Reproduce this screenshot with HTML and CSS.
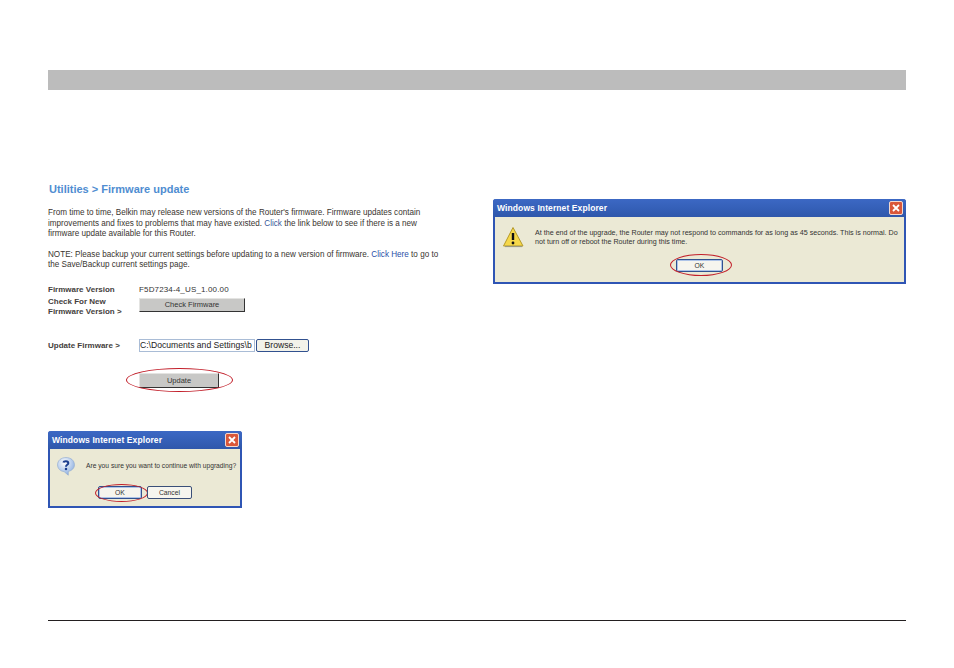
FILE: index.html
```html
<!DOCTYPE html>
<html lang="en">
<head>
<meta charset="utf-8">
<title>Firmware update</title>
<link rel="stylesheet" href="styles.css">
</head>
<body>
<div class="page">
  <div class="bar"></div>
  <main class="cols">
    <section class="left">
      <h1 class="title">Utilities &gt; Firmware update</h1>
      <p class="para p1">From time to time, Belkin may release new versions of the Router's firmware. Firmware updates contain<br>improvements and fixes to problems that may have existed. <span class="link-soft">Click</span> the link below to see if there is a new<br>firmware update available for this Router.</p>
      <p class="para p2">NOTE: Please backup your current settings before updating to a new version of firmware. <span class="link">Click Here</span> to go to<br>the Save/Backup current settings page.</p>
      <div class="form">
        <div class="lab">Firmware Version</div>
        <div class="val">F5D7234-4_US_1.00.00</div>
        <div class="lab lab2">Check For New<br>Firmware Version &gt;</div>
        <div class="btncell"><div class="gbtn gbtn-check">Check Firmware</div></div>
        <div class="lab lab3">Update Firmware &gt;</div>
        <div class="filecell">
          <div class="fileinput">C:\Documents and Settings\b</div>
          <div class="browse">Browse...</div>
        </div>
        <div class="updatecell">
          <div class="gbtn gbtn-update">Update<span class="oval oval-update"></span></div>
        </div>
      </div>
      <div class="dlg dlg-q">
        <div class="cap"><span class="cap-t">Windows Internet Explorer</span>
          <svg class="x" viewBox="0 0 14 14"><rect x=".5" y=".5" width="13" height="13" rx="1.5" fill="#d9573a" stroke="#f3d9cf"/><path d="M4 4l6 6M10 4l-6 6" stroke="#fff" stroke-width="1.8"/></svg>
        </div>
        <div class="dlg-body">
          <div class="msg-row">
            <svg class="ico-q" viewBox="0 0 26 26"><defs><radialGradient id="qg" cx=".4" cy=".3" r=".8"><stop offset="0" stop-color="#fff"/><stop offset="1" stop-color="#7da4dc"/></radialGradient></defs><path d="M13 2C6.500 2 2 6 2 11.500C2 16.500 6 20 10.500 20.300L16 25L16 20C21 19 24 15.500 24 11.500C24 6 19.500 2 13 2Z" fill="url(#qg)" stroke="#8fa9cf" stroke-width=".8"/><path d="M9.500 8.500C10 6.500 16 6 16 9.500C16 11.500 13 11.500 13 14" fill="none" stroke="#1d3f8f" stroke-width="2.600"/><circle cx="13" cy="17" r="1.600" fill="#1d3f8f"/></svg>
            <div class="msg">Are you sure you want to continue with upgrading?</div>
          </div>
          <div class="btns">
            <div class="xpbtn xp-def xp-ok">OK<span class="oval oval-ok"></span></div>
            <div class="xpbtn xp-cancel">Cancel</div>
          </div>
        </div>
      </div>
    </section>
    <section class="right">
      <div class="dlg dlg-w">
        <div class="cap"><span class="cap-t">Windows Internet Explorer</span>
          <svg class="x" viewBox="0 0 14 14"><rect x=".5" y=".5" width="13" height="13" rx="1.5" fill="#d9573a" stroke="#f3d9cf"/><path d="M4 4l6 6M10 4l-6 6" stroke="#fff" stroke-width="1.8"/></svg>
        </div>
        <div class="dlg-body">
          <div class="msg-row">
            <svg class="ico-w" viewBox="0 0 22 22"><path d="M11 1.500L21 20H1.500Z" fill="#f6d84a" stroke="#b59a2a" stroke-linejoin="round"/><path d="M20 20.500H3" stroke="#9c9a80" stroke-width="1.200"/><path d="M11 7v7" stroke="#111" stroke-width="2.400"/><circle cx="11" cy="17" r="1.400" fill="#111"/></svg>
            <div class="msg">At the end of the upgrade, the Router may not respond to commands for as long as 45 seconds. This is normal. Do<br>not turn off or reboot the Router during this time.</div>
          </div>
          <div class="btns">
            <div class="xpbtn xp-def xp-ok2">OK<span class="oval oval-ok2"></span></div>
          </div>
        </div>
      </div>
    </section>
  </main>
  <div class="rule"></div>
</div>
</body>
</html>
```

FILE: styles.css
```css
html, body { margin: 0; padding: 0; background: #fff; }
body { font-family: "Liberation Sans", Arial, sans-serif; color: #222; }
.page { width: 954px; height: 668px; box-sizing: border-box; padding: 70px 48px 0; display: flex; flex-direction: column; overflow: hidden; }
.bar { height: 20px; background: #bcbcbc; flex: none; }
.cols { height: 530px; flex: none; display: flex; }
.left { width: 445px; flex: none; padding-top: 93px; }
.right { width: 413px; flex: none; padding-top: 109px; }
.rule { height: 1px; background: #231f20; flex: none; }
.title { margin: 0 0 0 1px; font-size: 11px; line-height: 13px; font-weight: 700; color: #4f8dd1; }
.para { margin: 0; font-size: 8.150px; line-height: 10.500px; color: #3a3530; white-space: nowrap; }
.p1 { margin-top: 12px; }
.p2 { margin-top: 10px; }
.link { color: #2b4fa8; }
.link-soft { color: #3a5a98; }
.form { margin-top: 14px; display: grid; grid-template-columns: 91px 1fr; font-size: 8px; color: #333; }
.lab { font-weight: 700; color: #44403c; line-height: 10px; }
.val { line-height: 10px; font-size: 8px; letter-spacing: .15px; }
.lab2 { margin-top: 2px; }
.btncell { margin-top: 3px; }
.lab3 { margin-top: 24px; }
.gbtn { box-sizing: border-box; height: 14px; background: #c8c8c6; border: 1px solid; border-color: #e4e4e2 #333 #333 #e4e4e2; text-align: center; font-size: 7.500px; line-height: 12px; color: #333; position: relative; }
.gbtn-check { width: 106px; }
.filecell { margin-top: 22px; display: flex; }
.fileinput { box-sizing: border-box; width: 116px; height: 13px; border: 1px solid #a9bcd6; font-size: 8.600px; line-height: 11px; color: #222; overflow: hidden; white-space: nowrap; background: #fff; }
.browse { box-sizing: border-box; width: 53px; height: 13px; margin-left: 1px; border: 1px solid #31518f; border-radius: 2px; background: #f2f2ea; font-size: 8.600px; line-height: 11px; text-align: center; color: #222; }
.updatecell { grid-column: 2; margin-top: 21px; }
.gbtn-update { width: 80px; height: 15px; line-height: 13px; }
.oval { position: absolute; border: 1.700px solid #c21f2a; border-radius: 50%; box-sizing: border-box; pointer-events: none; }
.oval-update { left: -14px; top: -6px; width: 107px; height: 24px; }
.dlg { box-sizing: border-box; background: #ebe9d5; border: 2px solid #2f55b4; border-top: 0; border-radius: 3px 3px 0 0; display: flex; flex-direction: column; }
.dlg-q { width: 194px; height: 77px; margin-top: 43px; }
.dlg-w { width: 413px; height: 85px; }
.cap { flex: none; height: 18px; margin: 0 -2px; padding: 0 3px 0 4px; display: flex; align-items: center; justify-content: space-between; background: linear-gradient(#3c68c4, #3560b8 50%, #2f57ab); border-radius: 3px 3px 0 0; }
.cap-t { font-size: 8.500px; font-weight: 700; color: #fff; letter-spacing: .1px; }
.x { width: 14px; height: 14px; display: block; }
.dlg-body { flex: 1; display: flex; flex-direction: column; color: #333; }
.msg-row { display: flex; align-items: flex-start; }
.ico-q { width: 20px; height: 20px; margin: 7px 0 0 6px; flex: none; }
.dlg-q .msg { margin: 12px 0 0 10px; font-size: 6.700px; line-height: 10px; white-space: nowrap; }
.ico-w { width: 22px; height: 22px; margin: 9px 0 0 7px; flex: none; }
.dlg-w .msg { margin: 11.500px 0 0 11px; font-size: 7.150px; line-height: 9.500px; white-space: nowrap; }
.btns { display: flex; justify-content: center; gap: 5px; }
.xpbtn { box-sizing: border-box; height: 13px; border: 1px solid #3a4f78; border-radius: 2px; background: #f6f5ee; text-align: center; font-size: 6.800px; line-height: 11px; position: relative; }
.xp-def { border-color: #31518f; box-shadow: inset 0 0 0 1px #aec4e8; }
.dlg-q .btns { margin-top: 10px; }
.xp-ok { width: 44px; }
.xp-cancel { width: 45px; }
.dlg-w .btns { margin-top: 11px; }
.xp-ok2 { width: 47px; }
.oval-ok { left: -4px; top: -3px; width: 53px; height: 18px; }
.oval-ok2 { left: -7px; top: -6px; width: 62px; height: 22px; }
```
